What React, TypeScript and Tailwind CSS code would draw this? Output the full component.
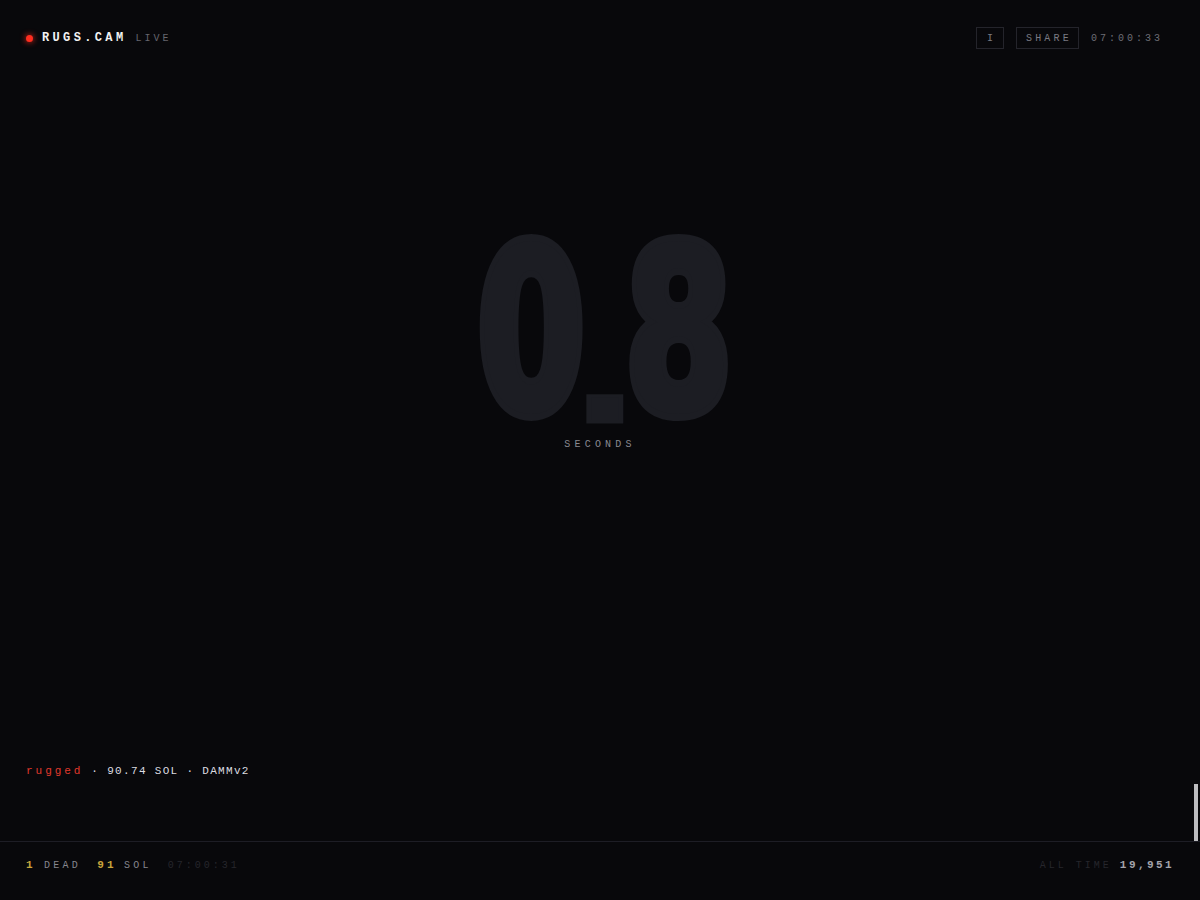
import React from "react";

const mono = "font-['Liberation_Mono','DejaVu_Sans_Mono',monospace]";

export default function App() {
  return (
    <div className={`relative flex h-screen flex-col overflow-hidden bg-[#08080b] ${mono}`}>
      {/* header */}
      <header className="flex h-[76px] items-center justify-between pl-[26px] pr-[37px]">
        <div className="flex items-center">
          <span className="h-[7px] w-[7px] rounded-full bg-[#ff2d1f] shadow-[0_0_6px_#ff2d1f]" />
          <span className="ml-[9px] text-[12px] font-bold tracking-[0.28em] text-[#f2f2f2]">
            RUGS.CAM
          </span>
          <span className="ml-[9px] text-[10px] tracking-[0.3em] text-[#66666e]">LIVE</span>
        </div>
        <div className="flex items-center">
          <button className="flex h-[22px] w-[28px] items-center justify-center border border-[#24242b] text-[10px] text-[#7a7a82]">
            I
          </button>
          <button className="ml-[12px] flex h-[22px] items-center border border-[#24242b] pl-[9px] pr-[6px] text-[10px] tracking-[0.32em] text-[#7a7a82]">
            SHARE
          </button>
          <span className="ml-[12px] text-[10px] tracking-[0.3em] text-[#6e6e76]">07:00:33</span>
        </div>
      </header>

      {/* counter */}
      <main className="flex flex-1 flex-col items-center pt-[161px]">
        <div className="flex h-[190px] items-center justify-center">
          <span className="inline-block scale-x-[0.68] font-['DejaVu_Sans','Liberation_Sans',sans-serif] text-[229px] font-bold leading-[190px] tracking-[-0.064em] text-[#1c1d23] [-webkit-text-stroke:14px_#1c1d23] [paint-order:stroke_fill]">
            0<span className="inline-block origin-[50%_192px] scale-y-[0.51]">.</span>8
          </span>
        </div>
        <div className="mt-[10px] text-[10px] tracking-[0.42em] text-[#8a8a92]">SECONDS</div>
      </main>

      {/* last event */}
      <div className="px-[26px] pb-[62px] text-[11px] leading-[16px]">
        <span className="tracking-[0.27em] text-[#e0392b]">rugged</span>
        <span className="tracking-[0.12em] text-[#dcdce0]"> · 90.74 SOL · DAMMv2</span>
      </div>

      <div className="absolute bottom-[59px] right-[2px] h-[57px] w-[4px] bg-[#bdbdc0]" />

      {/* footer */}
      <footer className="flex h-[59px] items-center justify-between border-t border-[#1d1d25] px-[26px] pb-[12px] text-[10px] tracking-[0.33em]">
        <div className="flex items-center">
          <span className="text-[11px] font-bold text-[#c9a43c]">1</span>
          <span className="ml-[8px] text-[#86868e]">DEAD</span>
          <span className="ml-[16px] text-[11px] font-bold text-[#c9a43c]">91</span>
          <span className="ml-[7px] text-[#86868e]">SOL</span>
          <span className="ml-[16px] tracking-[0.3em] text-[#26262c]">07:00:31</span>
        </div>
        <div className="flex items-center">
          <span className="tracking-[0.3em] text-[#26262c]">ALL TIME</span>
          <span className="ml-[8px] text-[11px] font-bold tracking-[0.22em] text-[#a4a4ac]">19,951</span>
        </div>
      </footer>
    </div>
  );
}
